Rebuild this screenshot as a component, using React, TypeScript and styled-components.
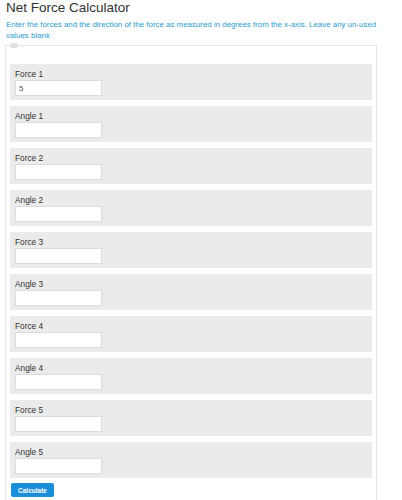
import { createGlobalStyle } from 'styled-components';
import styled from 'styled-components';

const GlobalStyle = createGlobalStyle`
  body {
    margin: 0;
    background: #fff;
    font-family: 'Liberation Sans', Arial, sans-serif;
  }
`;

const fields = [
  { label: 'Force 1', value: '5' },
  { label: 'Angle 1', value: '' },
  { label: 'Force 2', value: '' },
  { label: 'Angle 2', value: '' },
  { label: 'Force 3', value: '' },
  { label: 'Angle 3', value: '' },
  { label: 'Force 4', value: '' },
  { label: 'Angle 4', value: '' },
  { label: 'Force 5', value: '' },
  { label: 'Angle 5', value: '' },
];

function App() {
  return (
    <>
      <GlobalStyle />
      <Page>
        <Title>Net Force Calculator</Title>
        <Intro>
          Enter the forces and the direction of the force as measured in degrees from the
          x-axis. Leave any un-used values blank
        </Intro>
        <Form>
          <Legend />
          <FieldList>
            {fields.map((f) => (
              <FieldRow key={f.label}>
                <Label>{f.label}</Label>
                <Input type="text" defaultValue={f.value} />
              </FieldRow>
            ))}
          </FieldList>
          <CalcBtn>Calculate</CalcBtn>
        </Form>
      </Page>
    </>
  );
}

export default App;

const Page = styled.div`
  padding: 0 0 0 5px;
  width: 372px;
  height: 500px;
  overflow: hidden;
`;
const Title = styled.h1`
  margin: 0 0 0 1px;
  font-size: 13.5px;
  line-height: 16px;
  font-weight: normal;
  color: #333;
`;
const Intro = styled.p`
  margin: 4px 0 0 1px;
  font-size: 7.9px;
  line-height: 10.5px;
  color: #2b9bcc;
`;
const Form = styled.div`
  position: relative;
  margin-top: 4px;
  border: 1px solid #e6e6e6;
  box-shadow: 2px 0 0 #f6f6f6;
  padding: 18px 4px 8px 4px;
`;
const Legend = styled.span`
  position: absolute;
  left: 4px;
  top: -3px;
  width: 8px;
  height: 5px;
  border-radius: 2px;
  background: #e2e2e2;
`;
const FieldList = styled.div`
  display: flex;
  flex-direction: column;
  gap: 6px;
`;
const FieldRow = styled.div`
  background: #ebebeb;
  padding: 4px 5px;
  height: 36px;
  box-sizing: border-box;
  display: flex;
  flex-direction: column;
  align-items: flex-start;
`;
const Label = styled.label`
  font-size: 8.3px;
  line-height: 12px;
  color: #333;
`;
const Input = styled.input`
  box-sizing: border-box;
  width: 87px;
  height: 16px;
  margin: 0;
  padding: 0 0 0 3px;
  border: 1px solid #dcdcdc;
  background: #fff;
  font-family: 'Liberation Sans', Arial, sans-serif;
  font-size: 8px;
  color: #555;
  outline: none;
`;
const CalcBtn = styled.button`
  margin: 5px 0 0 1px;
  width: 43px;
  height: 14px;
  padding: 0;
  border: none;
  border-radius: 2px;
  background: #1a8ed8;
  color: #fff;
  font-family: 'Liberation Sans', Arial, sans-serif;
  font-size: 6.5px;
  font-weight: bold;
`;
